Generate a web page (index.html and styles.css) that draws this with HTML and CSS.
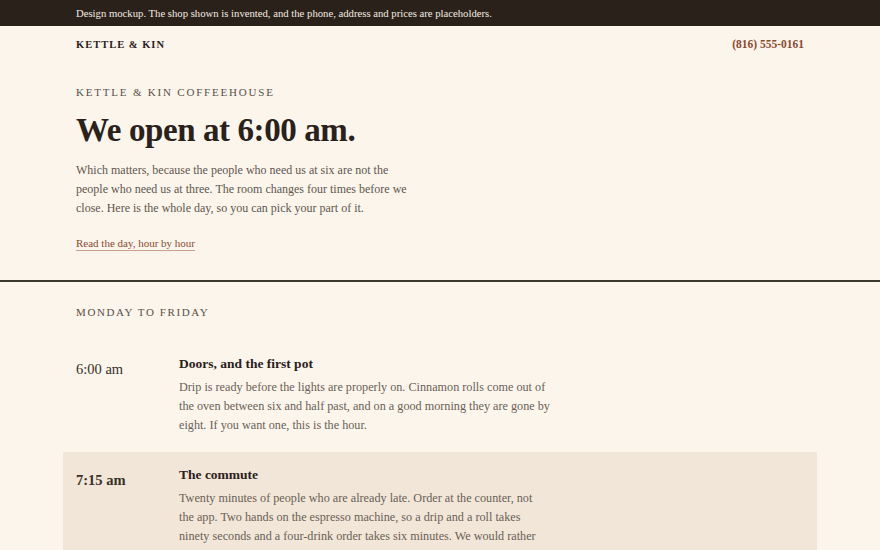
FILE: index.html
```html
<!DOCTYPE html>
<html lang="en">
<head>
    <meta charset="UTF-8">
    <title>Kettle &amp; Kin Coffeehouse</title>
    <link rel="stylesheet" href="styles.css">
</head>
<body>
    <div class="notice">
        <div class="wrap">Design mockup. The shop shown is invented, and the phone, address and prices are placeholders.</div>
    </div>

    <header class="wrap topbar">
        <span class="brand">KETTLE &amp; KIN</span>
        <a class="phone" href="#">(816) 555-0161</a>
    </header>

    <section class="wrap hero">
        <p class="eyebrow">KETTLE &amp; KIN COFFEEHOUSE</p>
        <h1>We open at 6:00 am.</h1>
        <p class="lede">Which matters, because the people who need us at six are not the people who need us at three. The room changes four times before we close. Here is the whole day, so you can pick your part of it.</p>
        <a class="day-link" href="#day">Read the day, hour by hour</a>
    </section>

    <section class="day" id="day">
        <div class="wrap">
            <h2 class="eyebrow">MONDAY TO FRIDAY</h2>

            <div class="hour">
                <div class="time">6:00 am</div>
                <div class="what">
                    <h3>Doors, and the first pot</h3>
                    <p>Drip is ready before the lights are properly on. Cinnamon rolls come out of the oven between six and half past, and on a good morning they are gone by eight. If you want one, this is the hour.</p>
                </div>
            </div>

            <div class="hour busy">
                <div class="time">7:15 am</div>
                <div class="what">
                    <h3>The commute</h3>
                    <p>Twenty minutes of people who are already late. Order at the counter, not the app. Two hands on the espresso machine, so a drip and a roll takes ninety seconds and a four-drink order takes six minutes. We would rather have you wait here than guess.</p>
                </div>
            </div>
        </div>
    </section>
</body>
</html>
```

FILE: styles.css
```css
body {
    margin: 0;
    background-color: #fcf5ec;
    color: #2a211b;
    font-family: 'Liberation Serif', 'Times New Roman', serif;
}

.wrap {
    max-width: 728px;
    margin: 0 auto;
}

.notice {
    background-color: #2a211b;
    color: #f3ebe0;
    font-size: 10.7px;
    line-height: 26px;
    height: 26px;
}

.topbar {
    display: flex;
    justify-content: space-between;
    align-items: center;
    height: 36px;
}

.brand {
    font-size: 10.5px;
    font-weight: bold;
    letter-spacing: 1px;
}

.phone {
    color: #8b4a2f;
    font-size: 11.5px;
    font-weight: bold;
    text-decoration: none;
}

.hero {
    padding: 24px 0 29px;
}

.eyebrow {
    margin: 0;
    font-size: 11px;
    line-height: 13px;
    font-weight: normal;
    letter-spacing: 1.8px;
    color: #5a5048;
}

h1 {
    margin: 11px 0 11px;
    font-size: 33px;
    line-height: 40px;
    letter-spacing: -0.4px;
}

.lede {
    margin: 0 0 15px;
    max-width: 336px;
    font-size: 12px;
    line-height: 19px;
    color: #5f554d;
}

.day-link {
    display: inline-block;
    color: #8b4a2f;
    font-size: 11px;
    line-height: 13px;
    text-decoration-color: #c9a08c;
    text-underline-offset: 3px;
}

.day {
    border-top: 2px solid #3b382e;
    padding-top: 24px;
}

.day .eyebrow {
    margin-bottom: 22px;
    letter-spacing: 1.6px;
}

.hour {
    display: grid;
    grid-template-columns: 103px 374px;
    margin: 0 -13px;
    padding: 13px 13px 17px;
}

.busy {
    background-color: #f1e6d8;
}

.busy .what p {
    max-width: 362px;
}

.time {
    padding-top: 7px;
    font-size: 14.5px;
    color: #3a3028;
}

.busy .time {
    font-weight: bold;
}

.what h3 {
    margin: 0 0 4px;
    font-size: 13.5px;
    line-height: 20px;
}

.what p {
    margin: 0;
    font-size: 12.2px;
    line-height: 19px;
    color: #6a5f56;
}
```
